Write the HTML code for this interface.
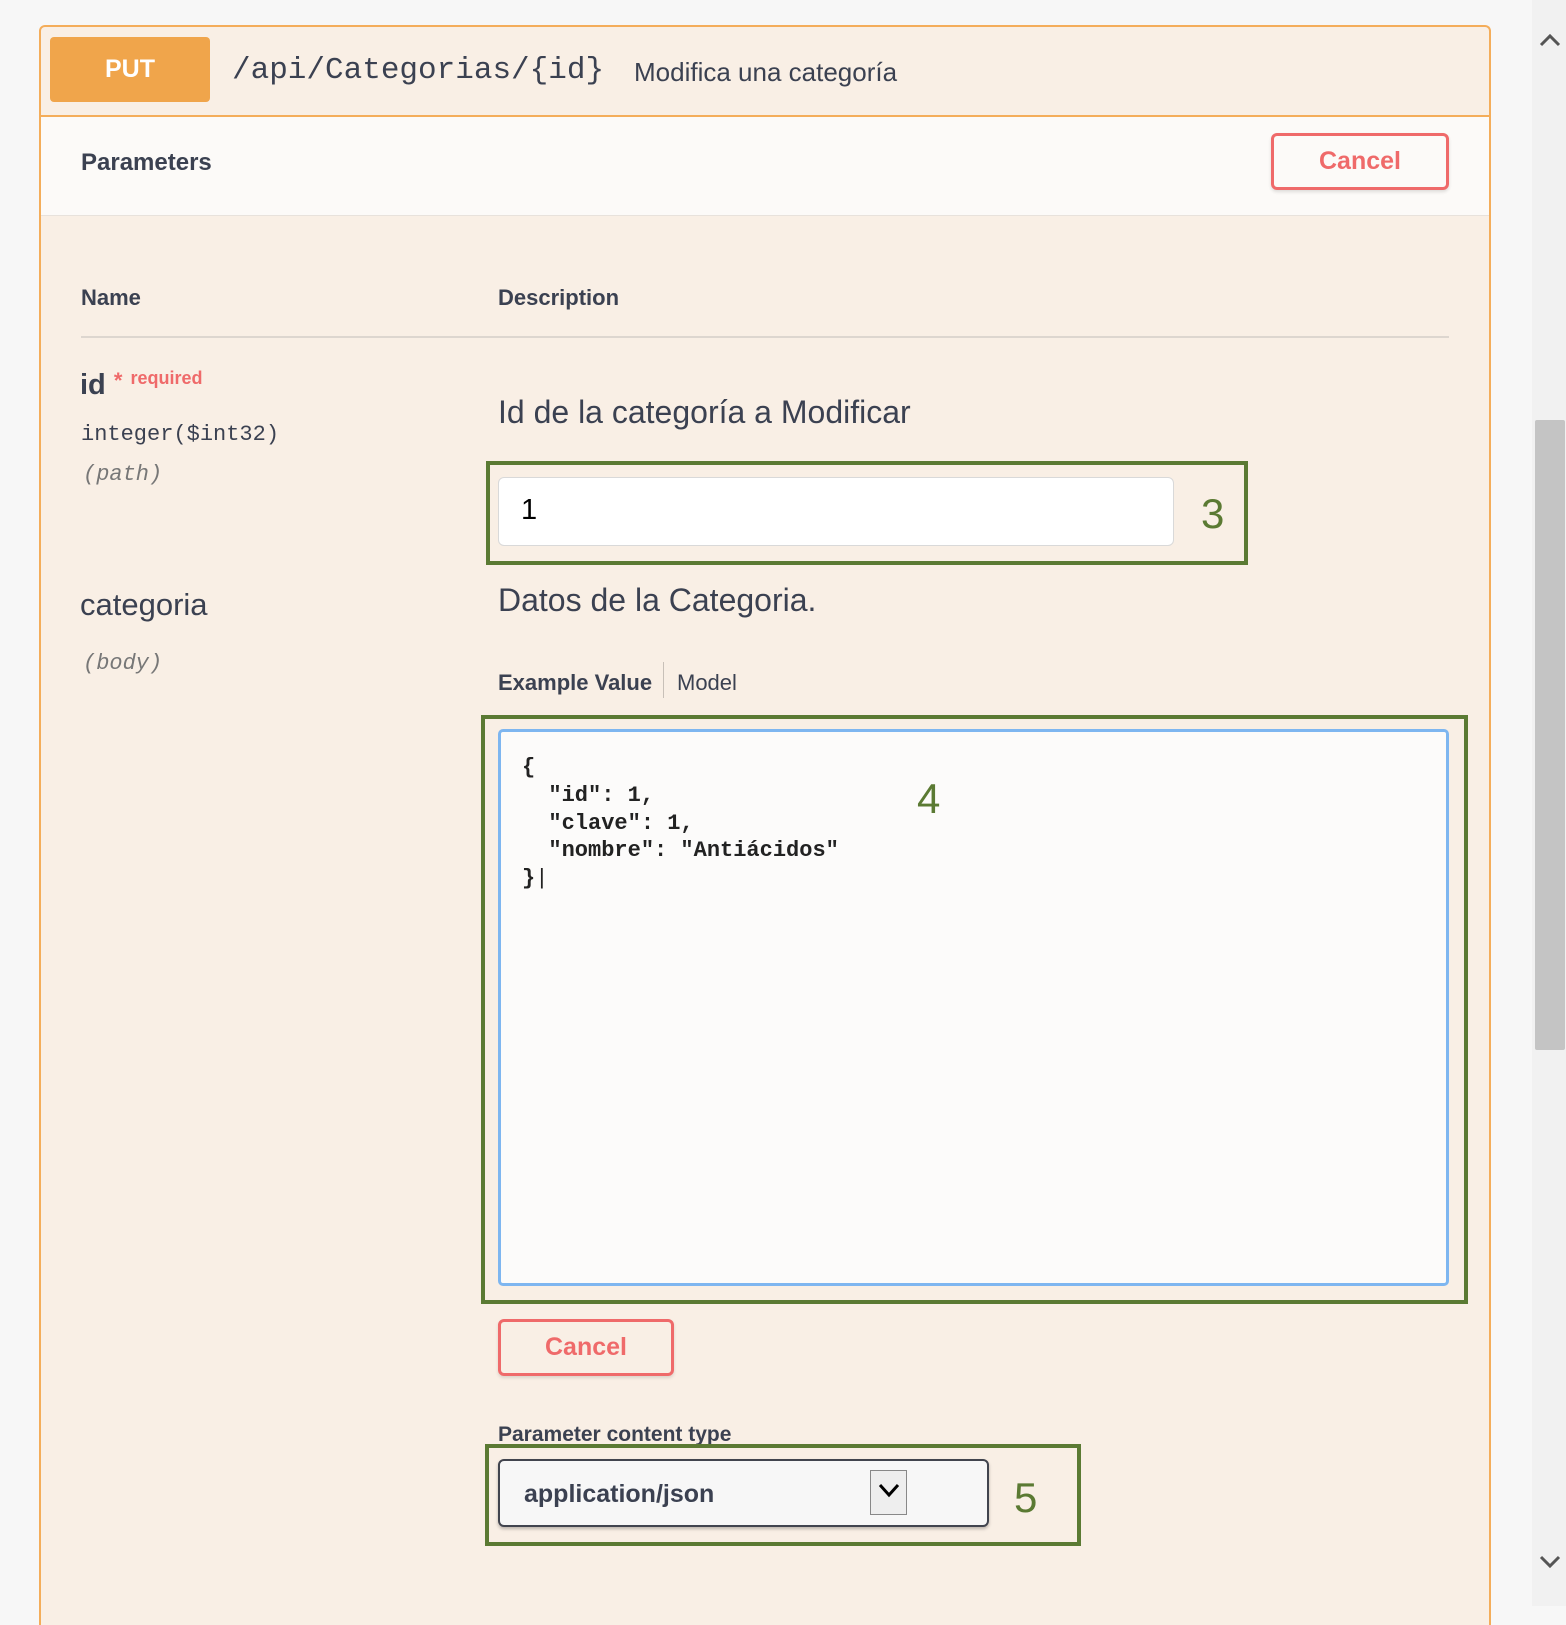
<!DOCTYPE html>
<html><head><meta charset="utf-8"><style>
*{box-sizing:border-box;margin:0;padding:0}
body{width:1566px;height:1606px;background:#f7f7f7;position:relative;overflow:hidden;font-family:"Liberation Sans Narrow","Liberation Sans",sans-serif;color:#3b4151}
.a{position:absolute}
.card{left:39px;top:25px;width:1452px;height:1600px;border:2px solid #f4ad5a;border-bottom:none;border-radius:6px 6px 0 0;background:#f9efe5}
.btn{border:3px solid #ef6a6a;border-radius:6px;color:#ef6a6a;font-weight:bold;font-size:25px;text-align:center;background:transparent;box-shadow:0 2px 3px rgba(0,0,0,.12)}
.g{border:4px solid #5b7a33}
.n{color:#5b7a33;font-family:"Liberation Sans",sans-serif;font-size:42px}
.mono{font-family:"Liberation Mono",monospace}
</style></head><body>
<div class="a" style="left:1532px;top:0;width:34px;height:1606px;background:#f1f1f1"></div>
<div class="a" style="left:1535px;top:420px;width:30px;height:630px;background:#c4c4c4;border-radius:2px"></div>
<svg class="a" style="left:1538px;top:30px" width="24" height="20"><path d="M3 15 L12 6 L21 15" stroke="#555" stroke-width="3" fill="none"/></svg>
<svg class="a" style="left:1538px;top:1552px" width="24" height="20"><path d="M3 5 L12 14 L21 5" stroke="#555" stroke-width="3" fill="none"/></svg>

<div class="a card"></div>
<div class="a" style="left:41px;top:115px;width:1448px;height:101px;background:#fcfaf8;border-top:2px solid #f4ad5a;border-bottom:1px solid #e8e2dc"></div>
<div class="a" style="left:50px;top:37px;width:160px;height:65px;background:#f0a54b;border-radius:4px;color:#fff;font-weight:bold;font-size:25px;line-height:65px;text-align:center">PUT</div>
<div class="a mono" style="left:232px;top:53px;font-size:31px;color:#3b4151">/api/Categorias/{id}</div>
<div class="a" style="left:634px;top:57px;font-size:26px">Modifica una categoría</div>
<div class="a" style="left:81px;top:149px;font-size:24px;font-weight:bold">Parameters</div>
<div class="a btn" style="left:1271px;top:133px;width:178px;height:57px;line-height:51px">Cancel</div>

<div class="a" style="left:81px;top:285px;font-size:22px;font-weight:bold">Name</div>
<div class="a" style="left:498px;top:285px;font-size:22px;font-weight:bold">Description</div>
<div class="a" style="left:81px;top:336px;width:1368px;height:2px;background:#ddd6cf"></div>

<div class="a" style="left:80px;top:368px;font-size:29px;font-weight:bold">id <span style="color:#ef6a6a;font-size:22px;vertical-align:top">*</span> <span style="color:#ef6a6a;font-size:18px;vertical-align:10px">required</span></div>
<div class="a mono" style="left:81px;top:422px;font-size:22px">integer($int32)</div>
<div class="a mono" style="left:83px;top:462px;font-size:22px;font-style:italic;color:#777">(path)</div>
<div class="a" style="left:498px;top:394px;font-size:32px">Id de la categoría a Modificar</div>
<div class="a g" style="left:486px;top:461px;width:762px;height:104px"></div>
<div class="a" style="left:498px;top:477px;width:676px;height:69px;background:#fff;border:1px solid #d9d9d9;border-radius:6px;font-family:'Liberation Sans',sans-serif;font-size:29px;color:#000;padding:16px 0 0 22px">1</div>
<div class="a n" style="left:1201px;top:490px">3</div>

<div class="a" style="left:80px;top:587px;font-size:31px">categoria</div>
<div class="a mono" style="left:83px;top:651px;font-size:22px;font-style:italic;color:#777">(body)</div>
<div class="a" style="left:498px;top:582px;font-size:32px">Datos de la Categoria.</div>
<div class="a" style="left:498px;top:670px;font-size:22px;font-weight:bold">Example Value</div>
<div class="a" style="left:663px;top:662px;width:1px;height:36px;background:#c8c0b8"></div>
<div class="a" style="left:677px;top:670px;font-size:22px">Model</div>
<div class="a g" style="left:481px;top:715px;width:987px;height:589px"></div>
<div class="a" style="left:498px;top:729px;width:951px;height:557px;background:#fcfbfa;border:3px solid #7eb6f0;border-radius:5px"></div>
<pre class="a mono" style="left:522px;top:754px;font-size:22px;line-height:27.8px;color:#222;font-weight:bold">{
  "id": 1,
  "clave": 1,
  "nombre": "Antiácidos"
}<span style="font-weight:normal">|</span></pre>
<div class="a n" style="left:917px;top:775px">4</div>

<div class="a btn" style="left:498px;top:1319px;width:176px;height:57px;line-height:51px">Cancel</div>
<div class="a" style="left:498px;top:1423px;font-size:21px;font-weight:bold">Parameter content type</div>
<div class="a g" style="left:485px;top:1444px;width:596px;height:102px"></div>
<div class="a" style="left:498px;top:1459px;width:491px;height:68px;background:#f7f7f7;border:2px solid #41444e;border-radius:6px;box-shadow:0 2px 3px rgba(0,0,0,.25);font-size:25px;font-weight:bold;padding:19px 0 0 24px">application/json</div>
<div class="a" style="left:870px;top:1470px;width:37px;height:45px;border:1px solid #888;background:#eee"></div>
<svg class="a" style="left:876px;top:1480px" width="26" height="20"><path d="M4 5 L13 15 L22 5" stroke="#000" stroke-width="3" fill="none"/></svg>
<div class="a n" style="left:1014px;top:1474px">5</div>
</body></html>
